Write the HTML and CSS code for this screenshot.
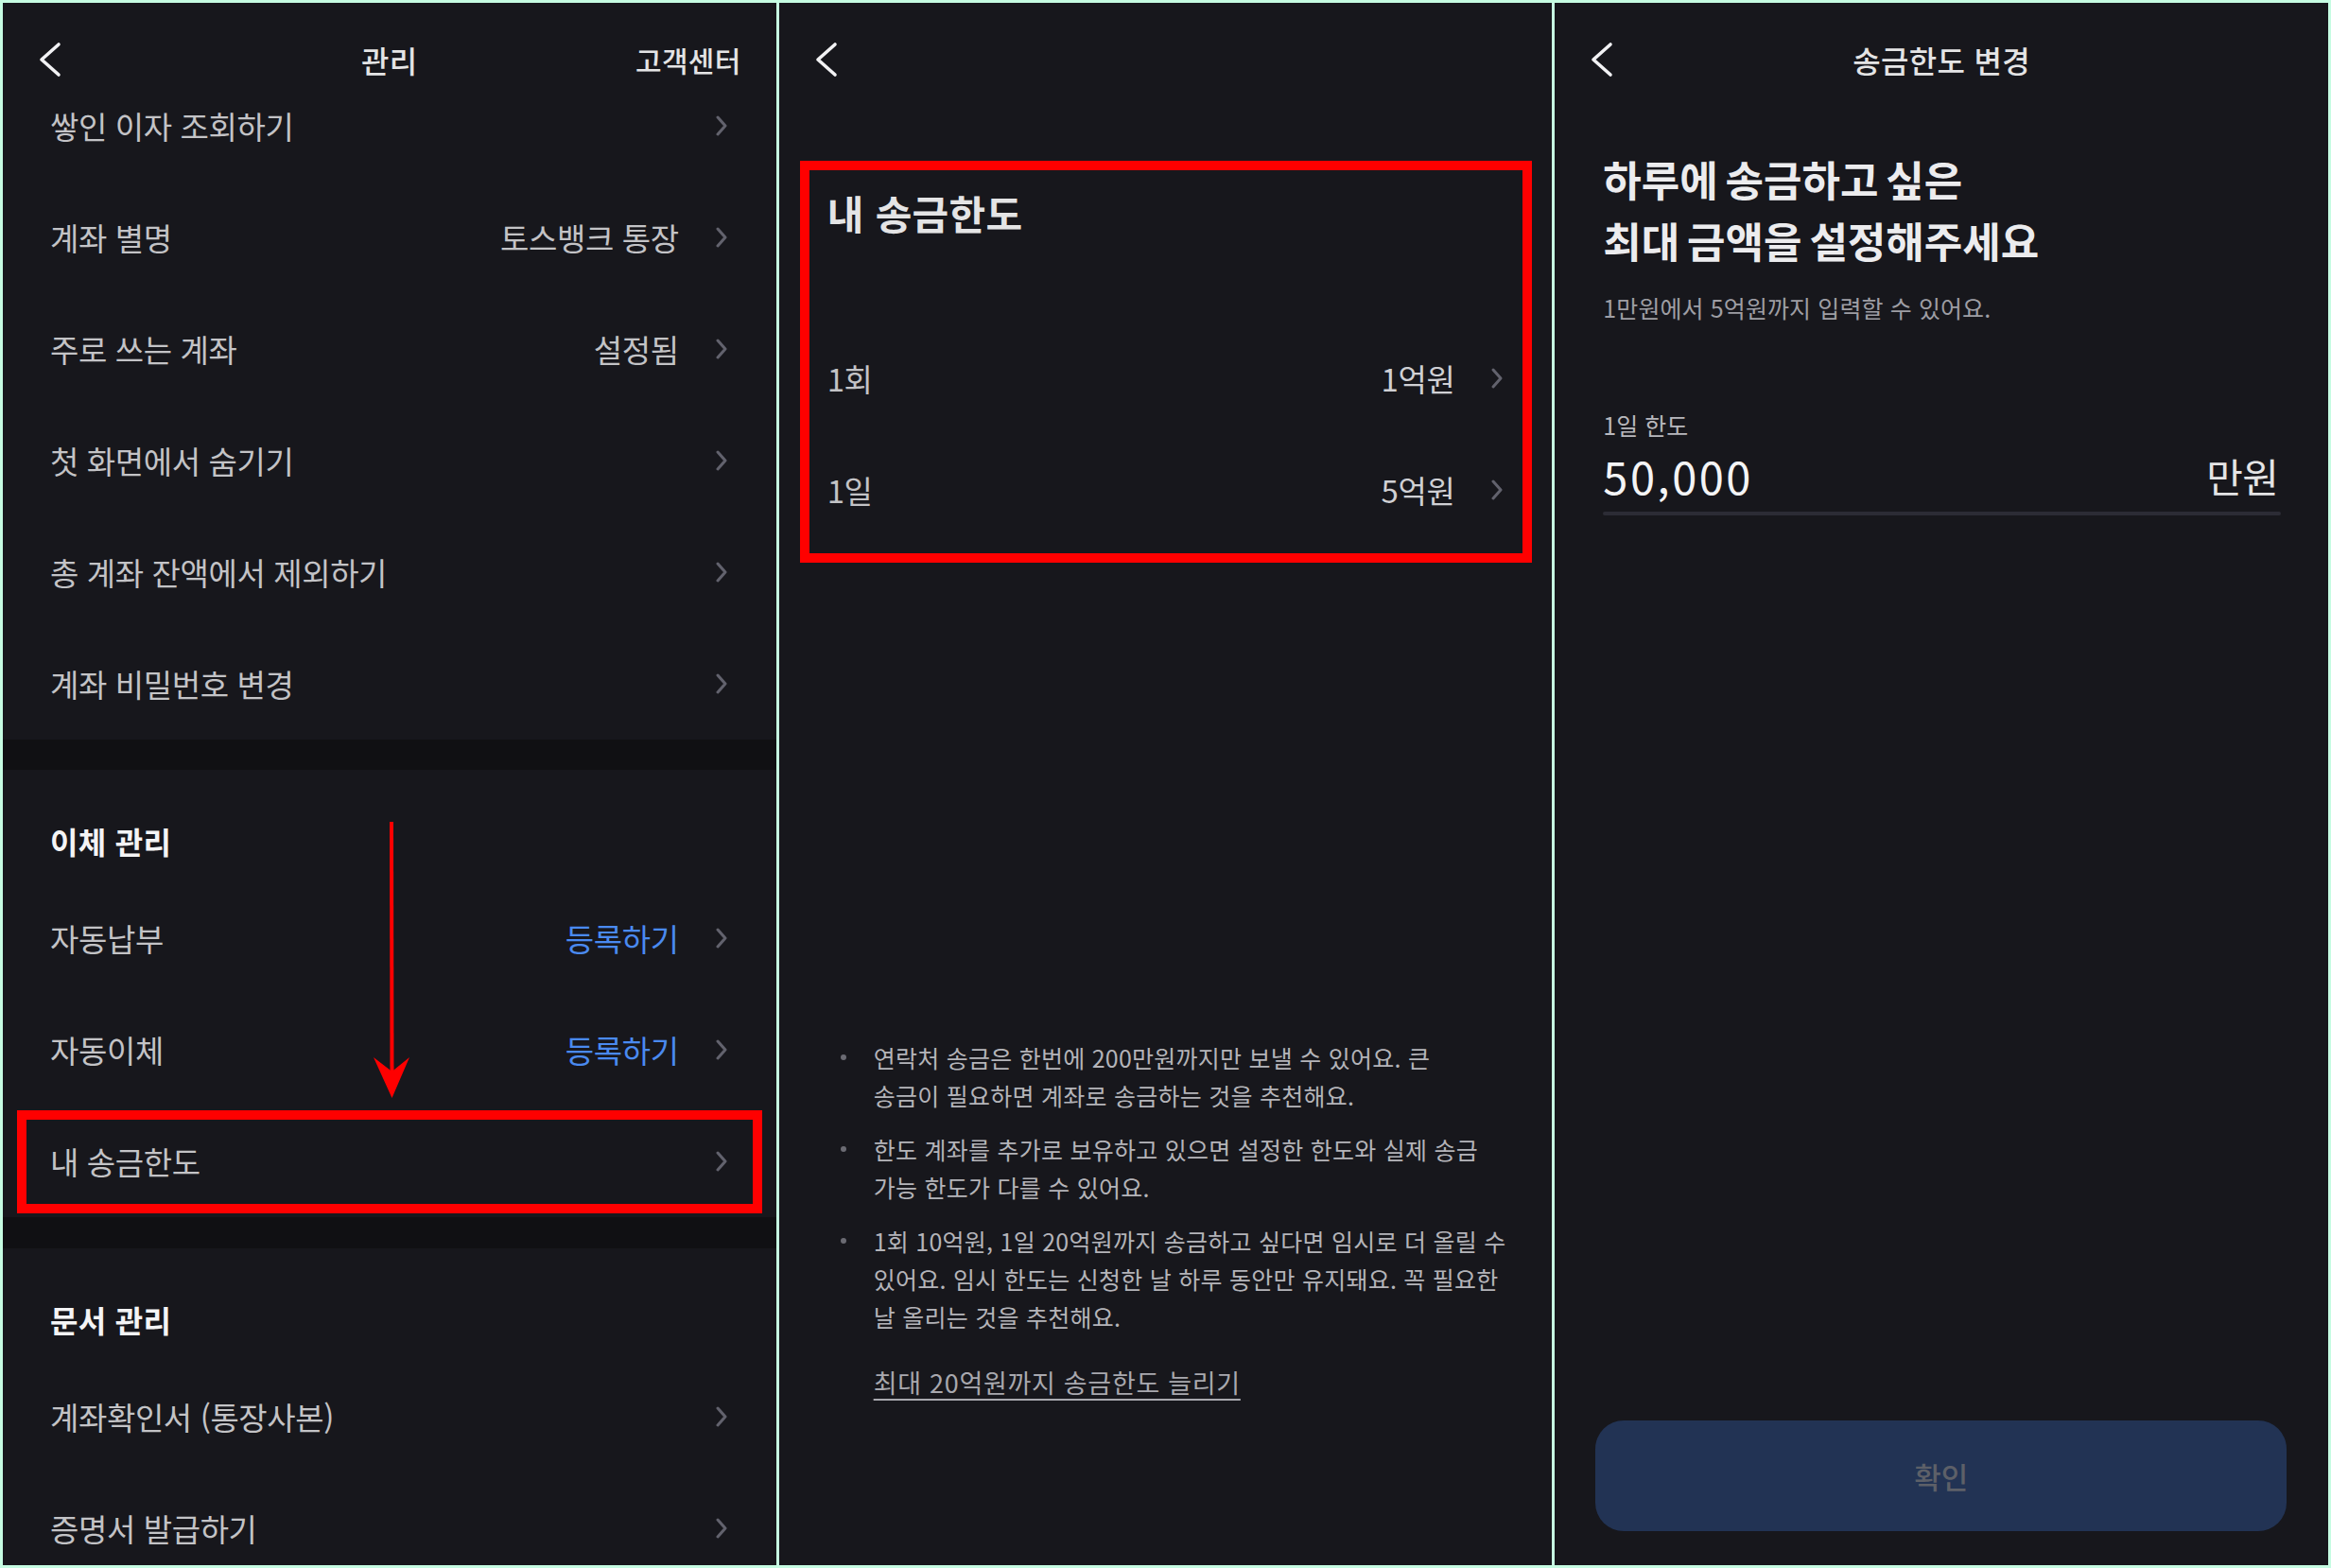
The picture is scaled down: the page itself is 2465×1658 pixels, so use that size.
FILE: index.html
```html
<!DOCTYPE html>
<html lang="ko">
<head>
<meta charset="utf-8">
<title>송금한도</title>
<link rel="stylesheet" href="styles.css">
</head>
<body>
  <section class="panel panel-manage">
    <header class="topbar">
      <span class="back"><svg width="24" height="40" viewBox="0 0 24 40"><path d="M21 4 L3 20 L21 36" fill="none" stroke="#f2f2f4" stroke-width="3.6" stroke-linecap="round" stroke-linejoin="round"/></svg></span>
      <span class="topbar-title">관리</span>
      <span class="topbar-action">고객센터</span>
    </header>
    <div class="scroll">
      <div class="list">
        <div class="row first"><span class="label">쌓인 이자 조회하기</span><svg class="chev" width="16" height="24" viewBox="0 0 16 24"><path d="M4 3 L12 12 L4 21" fill="none" stroke="#62626d" stroke-width="3" stroke-linecap="round" stroke-linejoin="round"/></svg></div>
        <div class="row"><span class="label">계좌 별명</span><span class="value">토스뱅크 통장</span><svg class="chev" width="16" height="24" viewBox="0 0 16 24"><path d="M4 3 L12 12 L4 21" fill="none" stroke="#62626d" stroke-width="3" stroke-linecap="round" stroke-linejoin="round"/></svg></div>
        <div class="row"><span class="label">주로 쓰는 계좌</span><span class="value">설정됨</span><svg class="chev" width="16" height="24" viewBox="0 0 16 24"><path d="M4 3 L12 12 L4 21" fill="none" stroke="#62626d" stroke-width="3" stroke-linecap="round" stroke-linejoin="round"/></svg></div>
        <div class="row"><span class="label">첫 화면에서 숨기기</span><svg class="chev" width="16" height="24" viewBox="0 0 16 24"><path d="M4 3 L12 12 L4 21" fill="none" stroke="#62626d" stroke-width="3" stroke-linecap="round" stroke-linejoin="round"/></svg></div>
        <div class="row"><span class="label">총 계좌 잔액에서 제외하기</span><svg class="chev" width="16" height="24" viewBox="0 0 16 24"><path d="M4 3 L12 12 L4 21" fill="none" stroke="#62626d" stroke-width="3" stroke-linecap="round" stroke-linejoin="round"/></svg></div>
        <div class="row"><span class="label">계좌 비밀번호 변경</span><svg class="chev" width="16" height="24" viewBox="0 0 16 24"><path d="M4 3 L12 12 L4 21" fill="none" stroke="#62626d" stroke-width="3" stroke-linecap="round" stroke-linejoin="round"/></svg></div>
      </div>
      <div class="divider"></div>
      <h3 class="group-title">이체 관리</h3>
      <div class="list">
        <div class="row"><span class="label">자동납부</span><span class="value link-blue">등록하기</span><svg class="chev" width="16" height="24" viewBox="0 0 16 24"><path d="M4 3 L12 12 L4 21" fill="none" stroke="#62626d" stroke-width="3" stroke-linecap="round" stroke-linejoin="round"/></svg></div>
        <div class="row"><span class="label">자동이체</span><span class="value link-blue">등록하기</span><svg class="chev" width="16" height="24" viewBox="0 0 16 24"><path d="M4 3 L12 12 L4 21" fill="none" stroke="#62626d" stroke-width="3" stroke-linecap="round" stroke-linejoin="round"/></svg></div>
        <div class="row highlight"><span class="label">내 송금한도</span><svg class="chev" width="16" height="24" viewBox="0 0 16 24"><path d="M4 3 L12 12 L4 21" fill="none" stroke="#62626d" stroke-width="3" stroke-linecap="round" stroke-linejoin="round"/></svg></div>
      </div>
      <div class="divider thick"></div>
      <h3 class="group-title">문서 관리</h3>
      <div class="list">
        <div class="row"><span class="label">계좌확인서 (통장사본)</span><svg class="chev" width="16" height="24" viewBox="0 0 16 24"><path d="M4 3 L12 12 L4 21" fill="none" stroke="#62626d" stroke-width="3" stroke-linecap="round" stroke-linejoin="round"/></svg></div>
        <div class="row"><span class="label">증명서 발급하기</span><svg class="chev" width="16" height="24" viewBox="0 0 16 24"><path d="M4 3 L12 12 L4 21" fill="none" stroke="#62626d" stroke-width="3" stroke-linecap="round" stroke-linejoin="round"/></svg></div>
      </div>
    </div>
    <svg class="arrow" width="44" height="304" viewBox="0 0 44 304">
      <line x1="23" y1="6" x2="23.5" y2="275" stroke="#ff0000" stroke-width="4"/>
      <polygon points="23.5,298 4,255 23.5,270 42,255" fill="#ff0000"/>
    </svg>
  </section>

  <section class="panel panel-limit">
    <header class="topbar">
      <span class="back"><svg width="24" height="40" viewBox="0 0 24 40"><path d="M21 4 L3 20 L21 36" fill="none" stroke="#f2f2f4" stroke-width="3.6" stroke-linecap="round" stroke-linejoin="round"/></svg></span>
      <span class="topbar-title"></span>
      <span class="topbar-action"></span>
    </header>
    <div class="limit-card">
      <h2 class="limit-title">내 송금한도</h2>
      <div class="limit-rows">
        <div class="row tight"><span class="label">1회</span><span class="value">1억원</span><svg class="chev" width="16" height="24" viewBox="0 0 16 24"><path d="M4 3 L12 12 L4 21" fill="none" stroke="#62626d" stroke-width="3" stroke-linecap="round" stroke-linejoin="round"/></svg></div>
        <div class="row tight"><span class="label">1일</span><span class="value">5억원</span><svg class="chev" width="16" height="24" viewBox="0 0 16 24"><path d="M4 3 L12 12 L4 21" fill="none" stroke="#62626d" stroke-width="3" stroke-linecap="round" stroke-linejoin="round"/></svg></div>
      </div>
    </div>
    <ul class="notes">
      <li>연락처 송금은 한번에 200만원까지만 보낼 수 있어요. 큰<br>송금이 필요하면 계좌로 송금하는 것을 추천해요.</li>
      <li>한도 계좌를 추가로 보유하고 있으면 설정한 한도와 실제 송금<br>가능 한도가 다를 수 있어요.</li>
      <li>1회 10억원, 1일 20억원까지 송금하고 싶다면 임시로 더 올릴 수<br>있어요. 임시 한도는 신청한 날 하루 동안만 유지돼요. 꼭 필요한<br>날 올리는 것을 추천해요.</li>
    </ul>
    <a class="raise-link">최대 20억원까지 송금한도 늘리기</a>
  </section>

  <section class="panel panel-change">
    <header class="topbar">
      <span class="back"><svg width="24" height="40" viewBox="0 0 24 40"><path d="M21 4 L3 20 L21 36" fill="none" stroke="#f2f2f4" stroke-width="3.6" stroke-linecap="round" stroke-linejoin="round"/></svg></span>
      <span class="topbar-title">송금한도 변경</span>
      <span class="topbar-action"></span>
    </header>
    <h1 class="headline">하루에 송금하고 싶은<br>최대 금액을 설정해주세요</h1>
    <p class="subline">1만원에서 5억원까지 입력할 수 있어요.</p>
    <p class="field-label">1일 한도</p>
    <div class="field">
      <span class="amount">50,000</span>
      <span class="unit">만원</span>
    </div>
    <div class="field-bar"></div>
    <div class="spacer"></div>
    <button class="confirm">확인</button>
  </section>
</body>
</html>
```

FILE: styles.css
```css
* { box-sizing: border-box; }

html, body {
  margin: 0;
  height: 1658px;
}

body {
  display: flex;
  gap: 3px;
  padding: 3px;
  background: #c6fce2;
  overflow: hidden;
  font-family: "Noto Sans CJK KR", "Noto Sans", sans-serif;
  color: #c3c3c6;
}

.panel {
  flex: 1;
  min-width: 0;
  background: #17171c;
  display: flex;
  flex-direction: column;
  overflow: hidden;
  position: relative;
}

/* top bar */
.topbar {
  height: 96px;
  padding: 24px 37px 0;
  display: grid;
  grid-template-columns: 1fr auto 1fr;
  align-items: center;
  flex-shrink: 0;
}
.back { display: flex; align-items: center; }
.back svg { display: block; margin-left: 1px; }
.topbar-title {
  font-size: 32px;
  font-weight: 500;
  letter-spacing: 0.3px;
  color: #e4e4e5;
  text-align: center;
}
.topbar-action {
  justify-self: end;
  font-size: 30px;
  font-weight: 500;
  letter-spacing: 0.3px;
  color: #e4e4e5;
}

/* lists */
.scroll { flex: 1; overflow: hidden; }
.row {
  display: flex;
  align-items: center;
  height: 118px;
  padding: 0 50px;
  font-size: 33px;
  letter-spacing: -0.4px;
  color: #c3c3c6;
  position: relative;
}
.row.first { margin-top: -25px; }
.row .label { flex: 1; white-space: nowrap; }
.row .value { margin-right: 37px; white-space: nowrap; color: #c3c3c6; }
.row .value.link-blue { color: #4a8af0; }
.chev { display: block; flex-shrink: 0; }

.row.highlight::after {
  content: "";
  position: absolute;
  top: 5px;
  bottom: 4px;
  left: 15px;
  right: 15px;
  border: 10px solid #ff0000;
}

.divider { height: 32px; background: #101013; }
.divider.thick { height: 33px; }

.group-title {
  margin: 0;
  padding: 55px 50px 24px;
  font-size: 32px;
  line-height: 40px;
  font-weight: 700;
  letter-spacing: 0.3px;
  color: #f4f4f5;
}

.arrow {
  position: absolute;
  left: 388px;
  top: 860px;
}

/* panel 2 */
.limit-card {
  margin: 71px 21px 0 22px;
  padding: 27px 29px 18px;
  position: relative;
}
.limit-card::after {
  content: "";
  position: absolute;
  inset: 0;
  border: 10px solid #ff0000;
}
.limit-title {
  margin: 0 0 88px;
  font-size: 42px;
  line-height: 56px;
  font-weight: 700;
  letter-spacing: 0.3px;
  color: #e4e4e5;
}
.row.tight { padding: 0; }
.limit-rows .value { color: #d0d0d4; }

.notes {
  list-style: none;
  margin: 503px 20px 0 65px;
  padding: 0;
  font-size: 25px;
  line-height: 40px;
  letter-spacing: 0.25px;
  color: #b4b4b9;
  white-space: nowrap;
}
.notes li { display: flex; }
.notes li::before {
  content: "";
  flex-shrink: 0;
  width: 6px;
  height: 6px;
  border-radius: 50%;
  background: #6b6b73;
  margin: 17px 29px 0 0;
}
.notes li + li { margin-top: 17px; }

.raise-link {
  margin: 30px 0 0 100px;
  font-size: 27px;
  line-height: 40px;
  letter-spacing: 0.7px;
  color: #a8a8ae;
  text-decoration: underline;
  text-underline-offset: 6px;
  text-decoration-thickness: 2px;
  align-self: flex-start;
}

/* panel 3 */
.headline {
  margin: 58px 50px 0 51px;
  font-size: 44px;
  line-height: 65px;
  font-weight: 700;
  letter-spacing: 0px;
  word-spacing: -4.5px;
  color: #ececee;
}
.subline {
  margin: 20px 50px 0 51px;
  font-size: 25px;
  line-height: 36px;
  letter-spacing: 0.1px;
  color: #9e9ea4;
}
.field-label {
  margin: 88px 50px 0 51px;
  font-size: 25px;
  line-height: 36px;
  letter-spacing: 0px;
  color: #b8b8bd;
}
.field {
  margin: 5px 53px 0 51px;
  height: 60px;
  display: flex;
  align-items: center;
  justify-content: space-between;
}
.amount {
  font-size: 47px;
  letter-spacing: 2.5px;
  color: #f4f4f5;
}
.unit {
  font-size: 42px;
  letter-spacing: -0.8px;
  color: #e4e4e5;
}
.field-bar {
  margin: 9px 50px 0 51px;
  height: 4px;
  border-radius: 2px;
  background: #2c2c35;
}
.spacer { flex: 1; }
.confirm {
  margin: 0 44px 36px 43px;
  height: 117px;
  border: 0;
  border-radius: 30px;
  background: #223354;
  color: #5d6068;
  font-family: "Noto Sans CJK KR", "Noto Sans", sans-serif;
  font-size: 31px;
  font-weight: 500;
  letter-spacing: 0px;
}
```
